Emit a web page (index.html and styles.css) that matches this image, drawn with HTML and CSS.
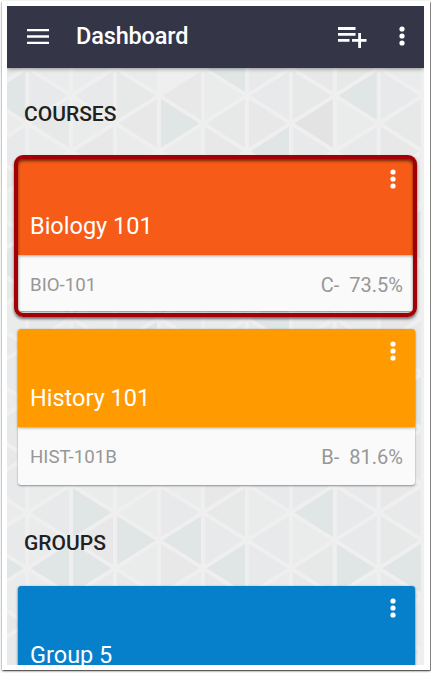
FILE: index.html
```html
<!DOCTYPE html>
<html lang="en">
<head>
<meta charset="utf-8">
<title>Dashboard</title>
<link rel="stylesheet" href="styles.css">
</head>
<body>
<div class="frame">
<div class="screen">
  <svg class="backdrop" id="backdrop" viewBox="7 68 417 597" aria-hidden="true"></svg>
  <header class="bar">
    <svg class="menu" viewBox="0 0 22 15"><path d="M0 1h22M0 7.5h22M0 14h22"/></svg>
    <h1>Dashboard</h1>
    <svg class="add" viewBox="0 0 29 21"><path d="M0 1.5h17.5M0 7.3h17.5M0 13.3h11.5M14 13.3h14.5M21.6 6v15"/></svg>
    <svg class="dots" viewBox="0 0 6 20"><circle cx="3" cy="3" r="2.6"/><circle cx="3" cy="10" r="2.6"/><circle cx="3" cy="17" r="2.6"/></svg>
  </header>
  <main>
    <h2>COURSES</h2>
    <section class="card biology selected">
      <div class="cover">
        <svg class="dots" viewBox="0 0 6 20"><circle cx="3" cy="3" r="2.6"/><circle cx="3" cy="10" r="2.6"/><circle cx="3" cy="17" r="2.6"/></svg>
        <h3>Biology 101</h3>
      </div>
      <div class="info"><span class="code">BIO-101</span><span class="grade"><span>C-</span><span>73.5%</span></span></div>
    </section>
    <section class="card history">
      <div class="cover">
        <svg class="dots" viewBox="0 0 6 20"><circle cx="3" cy="3" r="2.6"/><circle cx="3" cy="10" r="2.6"/><circle cx="3" cy="17" r="2.6"/></svg>
        <h3>History 101</h3>
      </div>
      <div class="info"><span class="code">HIST-101B</span><span class="grade"><span>B-</span><span>81.6%</span></span></div>
    </section>
    <h2 class="groups">GROUPS</h2>
    <section class="card group">
      <div class="cover">
        <svg class="dots" viewBox="0 0 6 20"><circle cx="3" cy="3" r="2.6"/><circle cx="3" cy="10" r="2.6"/><circle cx="3" cy="17" r="2.6"/></svg>
        <h3>Group 5</h3>
      </div>
    </section>
  </main>
</div>
</div>
<script src="backdrop.js"></script>
</body>
</html>
```
FILE: styles.css
```css
* { box-sizing: border-box; }
body {
  margin: 0;
  height: 673px;
  overflow: hidden;
  background: #fff;
  font-family: Roboto, "Liberation Sans", sans-serif;
}
h1, h2, h3 { margin: 0; font-weight: 500; white-space: nowrap; }
svg { display: block; flex: none; }
.frame {
  width: 428px;
  height: 669px;
  margin: 1px 1px 3px 2px;
  padding: 5px 4px 5px 5px;
  background: #fff;
  box-shadow: 0 0 1px 0.5px rgba(0, 0, 0, .35), 0 1px 2px rgba(0, 0, 0, .65);
}
.screen {
  position: relative;
  width: 417px;
  height: 659px;
  overflow: hidden;
  background: #efefef;
}
.backdrop {
  position: absolute;
  left: 0;
  top: 62px;
  width: 417px;
  height: 597px;
}
.facet { stroke: #efefef; stroke-width: 3.8; }
.c-a { fill: #e0e5e6; }
.c-b { fill: #e8e8e8; }
.c-c { fill: #e9eceb; }
.c-d { fill: #e7e9eb; }
.c-e { fill: #e6e9e7; }
.c-f { fill: #e3e3e3; }
.c-g { fill: #eeefee; }
.bar {
  position: relative;
  display: flex;
  align-items: center;
  height: 62px;
  padding: 0 19.5px 2px 20px;
  background: #343648;
  box-shadow: 0 1px 4px rgba(0, 0, 0, .4);
  color: #fff;
}
.bar h1 { margin-left: 27px; font-size: 23.5px; line-height: 30px; letter-spacing: -.15px; }
.menu { width: 22px; height: 15px; }
.menu path, .add path { fill: none; stroke: #fff; stroke-width: 2.4; }
.add { width: 29px; height: 21px; margin: 2px 31.5px 0 auto; }
.add path { stroke-width: 2.8; }
.dots { width: 6px; height: 20px; fill: #fff; }
main { position: relative; padding: 0 9px 0 11px; }
h2 { padding: 33px 0 0 6px; font-size: 21px; line-height: 26px; color: #212121; }
h2.groups { padding-top: 45px; }
.card {
  border-radius: 3px;
  background: #fafafa;
  box-shadow: 0 1px 2px rgba(0, 0, 0, .4);
}
.cover {
  display: flex;
  flex-direction: column;
  justify-content: space-between;
  height: 98px;
  padding: 12px 18.6px 13px 12px;
  border-radius: 3px 3px 0 0;
  box-shadow: 0 1px 3px rgba(0, 0, 0, .35);
}
.cover .dots { align-self: flex-end; }
.cover h3 { color: #fff; font-size: 23.5px; line-height: 32px; font-weight: 400; }
.biology .cover { padding-top: 11.5px; background: #f65b18; }
.history { margin-top: 18px; }
.history .cover { background: #ff9a00; }
.group { height: 155px; margin-top: 30px; }
.group .cover { background: #0780cb; }
.info {
  display: flex;
  justify-content: space-between;
  align-items: center;
  height: 58px;
  padding: 2px 12px 0;
  color: #979797;
  font-size: 20px;
}
.code { font-size: 18.7px; }
.grade { display: flex; gap: 10px; }
.selected { position: relative; margin-top: 30px; height: 154px; }
.selected .info { height: 56px; padding-top: 3px; }
.selected::after {
  content: "";
  position: absolute;
  inset: -2px -2px -6px -4px;
  border: 4px solid #a30005;
  border-radius: 9px;
  box-shadow: 0 2px 3px rgba(0, 0, 0, .55), inset 0 2px 3px rgba(0, 0, 0, .55);
}
```
FILE: backdrop.js
```js
// Triangular facets: each string is one vertical strip, each letter one row.
const X0 = 27.2, DX = 43.95, Y0 = 67.9, DY = 27.8;
const strips = [
  "dacdbcdaecbdcebdcdacbd",
  "cdecdbecadcbedccdcacbd",
  "cdcbcedbacdecbdcabadec",
  "cebcadcebdaceddccacebd",
  "gbacbdecadcbedccdabcde",
  "acebcadebcdaecbbedabcd",
  "ddbacedbcadecbddcddcea",
  "befdcbadecdbacddacebdc",
  "eacdbecadcbedcddddacbe",
  "cdebcdaecbdcaebbdeadcb"
];
let out = "";
strips.forEach((rows, i) => {
  const s = i - 1;
  const left = X0 + s * DX, right = left + DX;
  [...rows].forEach((tone, r) => {
    const y = Y0 + r * DY;
    const apexLeft = (s + r) % 2 === 0;
    const tip = apexLeft ? left : right, base = apexLeft ? right : left;
    out += `<polygon class="facet c-${tone}" points="${tip},${y} ${base},${y - DY} ${base},${y + DY}"/>`;
  });
});
document.getElementById("backdrop").innerHTML = out;
```
